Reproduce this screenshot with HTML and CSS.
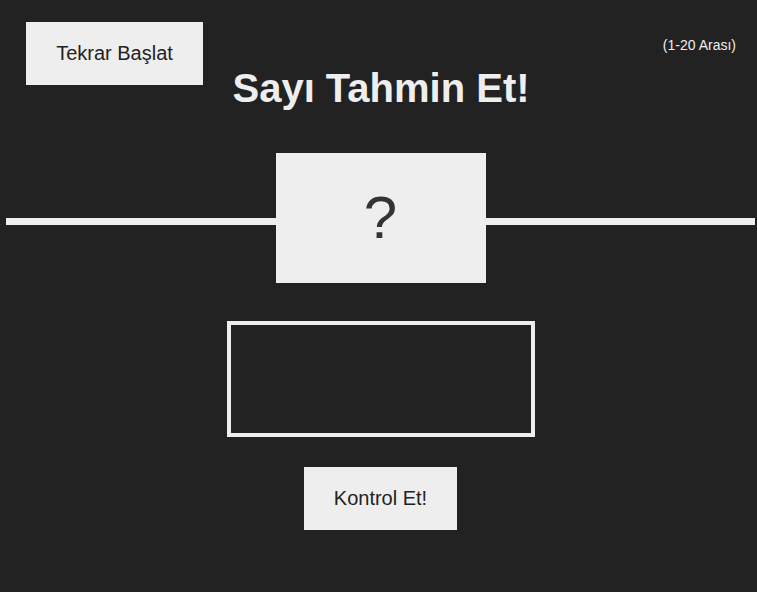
FILE: index.html
```html
<!DOCTYPE html>
<html lang="tr">
<head>
<meta charset="UTF-8">
<title>Sayı Tahmin Et!</title>
<link rel="stylesheet" href="styles.css">
</head>
<body>
<div class="page">
  <header class="header">
    <button class="btn again">Tekrar Başlat</button>
    <h1 class="title">Sayı Tahmin Et!</h1>
    <p class="between">(1-20 Arası)</p>
  </header>
  <div class="number-row">
    <div class="rule"></div>
    <div class="number">?</div>
    <div class="rule"></div>
  </div>
  <main class="main">
    <input type="number" class="guess">
    <button class="btn check">Kontrol Et!</button>
  </main>
</div>
</body>
</html>
```

FILE: styles.css
```css
* { box-sizing: border-box; }

body {
  margin: 0;
  background: #222;
  color: #eee;
  font-family: "Liberation Sans", Arial, sans-serif;
}

.page {
  margin: 0 2px 0 6px;
}

.header {
  display: grid;
  grid-template-columns: 1fr auto 1fr;
  grid-template-rows: 43px auto;
  padding: 22px 19px 0 20px;
}

.btn {
  border: none;
  background: #eee;
  color: #222;
  font-family: "Liberation Sans", Arial, sans-serif;
  font-size: 20px;
  line-height: 23px;
  padding: 20px 30px;
  cursor: pointer;
}

.again {
  grid-column: 1;
  grid-row: 1 / 3;
  justify-self: start;
  align-self: start;
  width: 177px;
  padding: 20px 0;
}

.title {
  grid-column: 2;
  grid-row: 2;
  margin: 0;
  font-size: 40px;
  line-height: 46px;
  font-weight: bold;
  text-align: center;
}

.between {
  grid-column: 3;
  grid-row: 1;
  justify-self: end;
  margin: 15px 0 0;
  font-size: 14px;
  line-height: 16px;
}

.number-row {
  display: flex;
  align-items: flex-start;
  margin-top: 42px;
}

.rule {
  flex: 1;
  height: 7px;
  margin-top: 65px;
  background: #eee;
}

.number {
  width: 210px;
  height: 130px;
  background: #eee;
  color: #333;
  font-size: 60px;
  line-height: 130px;
  text-align: center;
}

.main {
  display: flex;
  flex-direction: column;
  align-items: center;
  padding-top: 38px;
  gap: 30px;
}

.guess {
  width: 308px;
  height: 116px;
  border: 4px solid #eee;
  background: none;
  color: #eee;
  font-family: "Liberation Sans", Arial, sans-serif;
  font-size: 50px;
  text-align: center;
  outline: none;
}
```
